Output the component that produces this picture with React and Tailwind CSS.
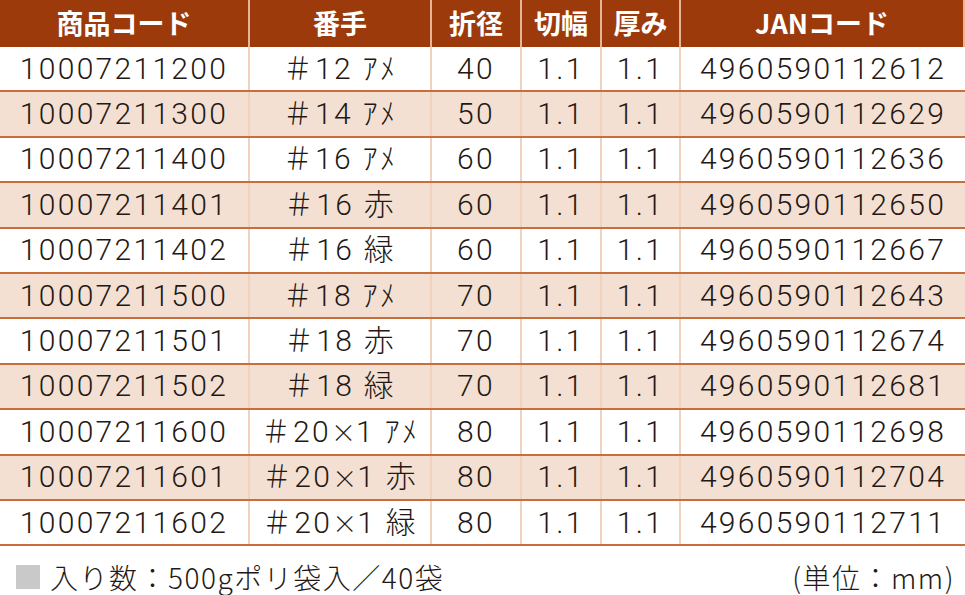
import React from "react";

const rows = [
  ["10007211200", "＃12 ", "ｱﾒ", "40", "4960590112612"],
  ["10007211300", "＃14 ", "ｱﾒ", "50", "4960590112629"],
  ["10007211400", "＃16 ", "ｱﾒ", "60", "4960590112636"],
  ["10007211401", "＃16 ", "赤", "60", "4960590112650"],
  ["10007211402", "＃16 ", "緑", "60", "4960590112667"],
  ["10007211500", "＃18 ", "ｱﾒ", "70", "4960590112643"],
  ["10007211501", "＃18 ", "赤", "70", "4960590112674"],
  ["10007211502", "＃18 ", "緑", "70", "4960590112681"],
  ["10007211600", "＃20×1 ", "ｱﾒ", "80", "4960590112698"],
  ["10007211601", "＃20×1 ", "赤", "80", "4960590112704"],
  ["10007211602", "＃20×1 ", "緑", "80", "4960590112711"],
];

const cols = "grid grid-cols-[250px_182px_90px_80px_79px_284px]";

// the multiplication sign is drawn wide in the reference
const Count = ({ text }) => {
  const parts = text.split("×");
  if (parts.length === 1) return text;
  return (
    <>
      {parts[0]}
      <span className="font-['Noto_Sans_CJK_JP',sans-serif] text-[25px] tracking-normal">×</span>
      {parts[1]}
    </>
  );
};

const App = () => {
  return (
    <div className="w-[965px] h-[595px] bg-white text-[#231815] font-['Roboto','Noto_Sans_CJK_JP',sans-serif] font-light">
      <div className={`${cols} h-[47px] bg-[#9c3a0c] text-white text-[27px] font-bold font-['Noto_Sans_CJK_JP',sans-serif]`}>
        <div className="flex items-center justify-center border-r-2 border-[#e8b496]">商品コード</div>
        <div className="flex items-center justify-center border-r-2 border-[#e8b496]">番手</div>
        <div className="flex items-center justify-center border-r-2 border-[#e8b496]">折径</div>
        <div className="flex items-center justify-center border-r-2 border-[#e8b496]">切幅</div>
        <div className="flex items-center justify-center border-r-2 border-[#e8b496]">厚み</div>
        <div className="flex items-center justify-center border-r-2 border-[#e8b496]">JANコード</div>
      </div>

      {rows.map((r, i) => (
        <div
          key={r[0]}
          className={`${cols} h-[45.4px] border-b-2 border-[#c86d3c] text-[30px] leading-none tracking-[2.3px] ${
            i % 2 === 1 ? "bg-[#f3e0d2]" : "bg-white"
          }`}
        >
          <div className="flex items-center justify-center border-r-2 border-[#f0d2bf]">{r[0]}</div>
          <div className="flex items-center justify-center border-r-2 border-[#f0d2bf] whitespace-pre">
            <Count text={r[1]} />
            {r[2]}
          </div>
          <div className="flex items-center justify-center border-r-2 border-[#f0d2bf]">{r[3]}</div>
          <div className="flex items-center justify-center border-r-2 border-[#f0d2bf]">1.1</div>
          <div className="flex items-center justify-center border-r-2 border-[#f0d2bf]">1.1</div>
          <div className="flex items-center justify-center">{r[4]}</div>
        </div>
      ))}

      <div className="flex items-center justify-between pt-[14px] pl-4 pr-[10px] text-[28px] leading-[34px] tracking-[1.5px] font-['Noto_Sans_CJK_JP',sans-serif] font-light">
        <div className="flex items-center">
          <span className="w-6 h-6 bg-[#c9c9c9] mr-[10px]"></span>
          <span>入り数：500gポリ袋入／40袋</span>
        </div>
        <span>(単位：mm)</span>
      </div>
    </div>
  );
};

export default App;
